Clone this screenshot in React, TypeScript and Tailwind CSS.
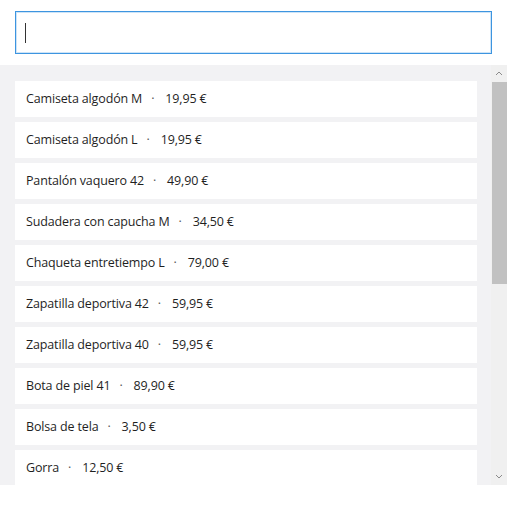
import React from "react";

interface Item {
  name: string;
  price: string;
}

const items: Item[] = [
  { name: "Camiseta algodón M", price: "19,95 €" },
  { name: "Camiseta algodón L", price: "19,95 €" },
  { name: "Pantalón vaquero 42", price: "49,90 €" },
  { name: "Sudadera con capucha M", price: "34,50 €" },
  { name: "Chaqueta entretiempo L", price: "79,00 €" },
  { name: "Zapatilla deportiva 42", price: "59,95 €" },
  { name: "Zapatilla deportiva 40", price: "59,95 €" },
  { name: "Bota de piel 41", price: "89,90 €" },
  { name: "Bolsa de tela", price: "3,50 €" },
  { name: "Gorra", price: "12,50 €" },
];

function ListRow({ item }: { item: Item }) {
  return (
    <div className="flex h-[36px] shrink-0 items-center bg-white pl-[11px] text-[12.5px] tracking-[-0.15px] text-[#1f1f1f]">
      <span>{item.name}</span>
      <span className="ml-[9px] mr-[11px] text-[#555]">·</span>
      <span>{item.price}</span>
    </div>
  );
}

export default function App() {
  return (
    <div
      className="flex h-[520px] w-[520px] flex-col bg-white"
      style={{ fontFamily: '"Segoe UI", "Open Sans", "Noto Sans", sans-serif' }}
    >
      <div className="px-[15px] pt-[11px] pb-[11px] w-[507px]">
        <div className="flex h-[43px] items-center border border-[#3d95e0] bg-white px-[9px] shadow-[inset_0_0_0_1px_rgba(61,149,224,0.25)]">
          <span className="h-[20px] w-px bg-[#333]" />
        </div>
      </div>
      <div className="flex h-[420px] w-[507px] bg-[#f2f2f4]">
        <div className="flex flex-1 flex-col gap-[5px] overflow-hidden pt-[16px] pl-[15px] pr-[14px]">
          {items.map((item) => (
            <ListRow key={item.name} item={item} />
          ))}
        </div>
        <div className="flex w-[16px] flex-col items-center bg-[#f0f0f0]">
          <svg className="h-[17px] w-[16px]" viewBox="0 0 16 17">
            <path d="M5 10 L8 7 L11 10" fill="none" stroke="#8a8a8a" strokeWidth="1" />
          </svg>
          <div className="h-[202px] w-[15px] bg-[#c1c1c1]" />
          <div className="flex-1" />
          <svg className="h-[17px] w-[16px]" viewBox="0 0 16 17">
            <path d="M5 7 L8 10 L11 7" fill="none" stroke="#8a8a8a" strokeWidth="1" />
          </svg>
        </div>
      </div>
    </div>
  );
}
